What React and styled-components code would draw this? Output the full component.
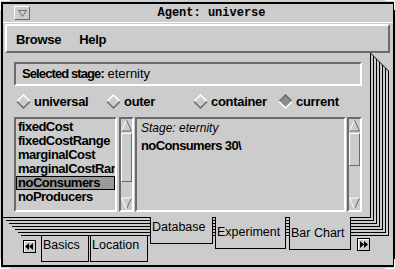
import React from 'react'
import styled, { createGlobalStyle, css } from 'styled-components'

const GRAY = '#cccccc'
const SHADE = '#6b6b6b'
const LIGHT = '#ffffff'
const SANS = '"Liberation Sans", Arial, sans-serif'

const GlobalStyle = createGlobalStyle`
  html, body {
    margin: 0;
    padding: 0;
    background: ${GRAY};
  }
  body {
    width: 395px;
    height: 269px;
    overflow: hidden;
    font-family: ${SANS};
    color: #000;
  }
`

const sunken = css`
  box-sizing: border-box;
  border: 2px solid;
  border-color: ${SHADE} ${LIGHT} ${LIGHT} ${SHADE};
`

// pages lying behind the current one: each a gray sheet with a black edge
const pageStack = Array.from({ length: 6 }, (_, i) => {
  const k = i + 1
  return `${3 * k - 1}px ${3 * k - 1}px 0 ${GRAY}, ${3 * k}px ${3 * k}px 0 #000`
}).join(', ')

const Frame = styled.div`
  position: relative;
  width: 395px;
  height: 269px;
  box-sizing: border-box;
  padding: 2px 0 2px 1px;
  background: ${GRAY};
`

const Window = styled.div`
  box-sizing: border-box;
  height: 100%;
  border: 2px solid #000;
  display: flex;
  flex-direction: column;
`

const Corner = styled.span`
  position: absolute;
  width: 9px;
  height: 9px;
  ${p => p.$pos}: 0;
  ${p => p.$side}: 0;
  border-${p => p.$pos}: 1px solid ${LIGHT};
  border-${p => p.$side}: 1px solid ${LIGHT};
`

const TitleBar = styled.div`
  height: 18px;
  border-bottom: 1px solid ${LIGHT};
  display: flex;
  align-items: flex-start;
`

const TitleButton = styled.div`
  box-sizing: border-box;
  width: 16px;
  height: 14px;
  margin: 2px 0 0 11px;
  border: 1px solid;
  border-color: ${LIGHT} ${SHADE} ${SHADE} ${LIGHT};
  display: flex;
  align-items: center;
  justify-content: center;
`

const Title = styled.div`
  flex: 1;
  padding-top: 2px;
  text-align: center;
  font: bold 12px "Liberation Mono", "DejaVu Sans Mono", monospace;
  line-height: 14px;
`

const MenuBar = styled.div`
  box-sizing: border-box;
  height: 29px;
  margin: 1px 3px 0 2px;
  border: 2px solid;
  border-color: ${LIGHT} ${SHADE} ${SHADE} ${LIGHT};
  display: flex;
  align-items: center;
  padding: 2px 0 0 9px;
`

const Menu = styled.span`
  font: bold 13px ${SANS};
  letter-spacing: -0.3px;
  line-height: 15px;
  margin-right: 18px;
`

const Notebook = styled.div`
  position: relative;
  flex: 1;
  display: flex;
  flex-direction: column;
`

const StackCorner = styled.svg`
  position: absolute;
  left: 365px;
  top: 0;
`

const Page = styled.div`
  box-sizing: border-box;
  width: 368px;
  height: 165px;
  padding: 9px 8px 0 11px;
  background: ${GRAY};
  border-right: 1px solid #000;
  border-bottom: 1px solid #000;
  box-shadow: ${pageStack};
  display: flex;
  flex-direction: column;
`

const StageField = styled.div`
  ${sunken};
  height: 24px;
  padding: 2px 6px 0;
  font: 13px ${SANS};
  line-height: 16px;
  white-space: nowrap;

  b {
    letter-spacing: -0.9px;
  }
`

const RadioRow = styled.div`
  height: 31px;
  padding-left: 2px;
  display: grid;
  grid-template-columns: 90px 87px 85px auto;
  align-items: center;
`

const Radio = styled.label`
  display: flex;
  align-items: center;
  gap: 3px;
  font: bold 13px ${SANS};
  letter-spacing: -0.3px;
  line-height: 15px;
`

const Panes = styled.div`
  height: 95px;
  display: flex;
`

const ListBox = styled.div`
  ${sunken};
  width: 103px;
  padding-top: 1px;
  overflow: hidden;
`

const ListItem = styled.div`
  height: 14px;
  padding-left: 2px;
  font: bold 13px ${SANS};
  letter-spacing: -0.5px;
  line-height: 14px;
  white-space: nowrap;
  background: ${p => (p.$selected ? '#9a9a9a' : 'transparent')};
  outline: ${p => (p.$selected ? '1px solid #000' : 'none')};
  outline-offset: -1px;
`

const TextPane = styled.div`
  ${sunken};
  width: 211px;
  margin-left: 1px;
  padding: 2px 4px;
`

const StageLine = styled.div`
  font: italic 12px ${SANS};
  line-height: 14px;
`

const ValueLine = styled.div`
  margin-top: 4px;
  font: bold 13px ${SANS};
  letter-spacing: -0.6px;
  line-height: 14px;
`

const Trough = styled.div`
  ${sunken};
  width: 15px;
  margin-left: ${p => p.$ml}px;
  display: flex;
  flex-direction: column;
`

const Slider = styled.div`
  box-sizing: border-box;
  margin: 1px 0;
  height: ${p => (p.$h ? `${p.$h}px` : 'auto')};
  flex: ${p => (p.$h ? 'none' : '1')};
  border: 1px solid;
  border-color: ${LIGHT} ${SHADE} ${SHADE} ${LIGHT};
`

const Spacer = styled.div`
  flex: 1;
`

const TabRow = styled.div`
  display: flex;
  align-items: flex-start;
  padding-left: 20px;
`

const Tab = styled.div`
  box-sizing: border-box;
  width: ${p => p.$w}px;
  height: ${p => p.$h}px;
  margin-top: ${p => p.$top}px;
  margin-left: ${p => p.$ml}px;
  padding: 0 0 8px 1px;
  background: ${GRAY};
  border: 1px solid #000;
  border-top: none;
  display: flex;
  align-items: flex-end;
  font: 12.5px ${SANS};
  line-height: 15px;
  white-space: nowrap;
`

const PageButton = styled.div`
  box-sizing: border-box;
  width: 13px;
  height: 13px;
  margin-top: ${p => p.$top}px;
  margin-left: ${p => p.$ml}px;
  border: 1px solid #000;
  box-shadow: inset 1px 1px 0 ${LIGHT};
  display: flex;
  align-items: center;
  justify-content: center;
`

const Diamond = ({ on }) => (
  <svg width="15" height="15" viewBox="0 0 15 15">
    <polygon points="7.5,1 14,7.5 7.5,14 1,7.5" fill={on ? '#8c8c8c' : GRAY} />
    <polyline points="1,7.5 7.5,1 14,7.5" fill="none" stroke={on ? SHADE : LIGHT} strokeWidth="1.5" />
    <polyline points="1,7.5 7.5,14 14,7.5" fill="none" stroke={on ? LIGHT : SHADE} strokeWidth="1.5" />
  </svg>
)

const Arrow = ({ down }) => (
  <svg width="11" height="13" viewBox="0 0 11 13" style={{ flex: 'none' }}>
    <g transform={down ? 'rotate(180 5.5 6.5)' : undefined}>
      <polygon points="5.5,1 10.5,12 0.5,12" fill={GRAY} />
      <line x1="0.5" y1="12" x2="5.5" y2="1" stroke={down ? SHADE : LIGHT} strokeWidth="1" />
      <line x1="5.5" y1="1" x2="10.5" y2="12" stroke={down ? LIGHT : SHADE} strokeWidth="1" />
      <line x1="0.5" y1="12" x2="10.5" y2="12" stroke={down ? LIGHT : SHADE} strokeWidth="1" />
    </g>
  </svg>
)

const Jump = ({ back }) => (
  <svg width="9" height="7" viewBox="0 0 9 7">
    <g transform={back ? 'scale(-1 1) translate(-9 0)' : undefined}>
      <polygon points="1,0 5,3.5 1,7" fill="#000" />
      <polygon points="5,0 9,3.5 5,7" fill="#000" />
    </g>
  </svg>
)

const ScrollBar = ({ ml, slider }) => (
  <Trough $ml={ml}>
    <Arrow />
    <Slider $h={slider} />
    <Spacer />
    <Arrow down />
  </Trough>
)

const stages = [
  { label: 'universal' },
  { label: 'outer' },
  { label: 'container' },
  { label: 'current', on: true },
]

const costs = ['fixedCost', 'fixedCostRange', 'marginalCost', 'marginalCostRange', 'noConsumers', 'noProducers']

const tabs = [
  { label: 'Basics', w: 48, h: 26, top: 18, ml: 5 },
  { label: 'Location', w: 58, h: 26, top: 18, ml: 1 },
  { label: 'Database', w: 63, h: 27, top: -1, ml: 2 },
  { label: 'Experiment', w: 71, h: 32, top: -1, ml: 2 },
  { label: 'Bar Chart', w: 62, h: 33, top: -1, ml: 3 },
]

const App = () => {
  return (
    <>
      <GlobalStyle />
      <Frame>
        <Window>
          <TitleBar>
            <TitleButton>
              <svg width="9" height="7" viewBox="0 0 9 7">
                <polygon points="0.5,0.5 8.5,0.5 4.5,6.5" fill="none" stroke={SHADE} strokeWidth="1" />
              </svg>
            </TitleButton>
            <Title>Agent: universe</Title>
          </TitleBar>
          <MenuBar>
            <Menu>Browse</Menu>
            <Menu>Help</Menu>
          </MenuBar>
          <Notebook>
            <StackCorner width="24" height="22" viewBox="0 0 24 22">
              <line x1="2.5" y1="0" x2="20.5" y2="18" stroke="#000" strokeWidth="1" />
            </StackCorner>
            <Page>
              <StageField>
                <b>Selected stage:</b> eternity
              </StageField>
              <RadioRow>
                {stages.map(s => (
                  <Radio key={s.label}>
                    <Diamond on={s.on} />
                    {s.label}
                  </Radio>
                ))}
              </RadioRow>
              <Panes>
                <ListBox>
                  {costs.map(c => (
                    <ListItem key={c} $selected={c === 'noConsumers'}>{c}</ListItem>
                  ))}
                </ListBox>
                <ScrollBar ml={2} slider={49} />
                <TextPane>
                  <StageLine>Stage: eternity</StageLine>
                  <ValueLine>noConsumers 30\</ValueLine>
                </TextPane>
                <ScrollBar ml={1} />
              </Panes>
            </Page>
            <TabRow>
              <PageButton $top={22} $ml={0}>
                <Jump back />
              </PageButton>
              {tabs.map(t => (
                <Tab key={t.label} $w={t.w} $h={t.h} $top={t.top} $ml={t.ml}>
                  {t.label}
                </Tab>
              ))}
              <PageButton $top={20} $ml={6}>
                <Jump />
              </PageButton>
            </TabRow>
          </Notebook>
        </Window>
        <Corner $pos="top" $side="left" />
        <Corner $pos="top" $side="right" />
        <Corner $pos="bottom" $side="left" />
        <Corner $pos="bottom" $side="right" />
      </Frame>
    </>
  )
}

export default App
